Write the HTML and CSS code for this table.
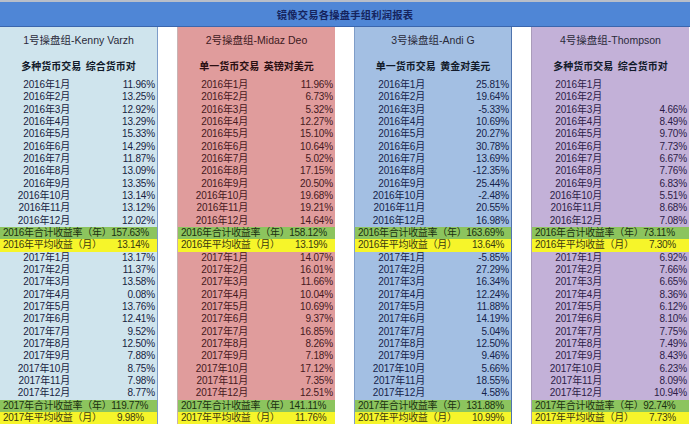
FILE: index.html
```html
<!DOCTYPE html>
<html lang="zh-CN">
<head>
<meta charset="utf-8">
<title>镜像交易各操盘手组利润报表</title>
<link rel="stylesheet" href="styles.css">
</head>
<body>
<div class="sheet">
  <div class="titlebar"><span class="title">镜像交易各操盘手组利润报表</span></div>
  <div class="panels">
    <section class="panel p1">
      <div class="ph">1号操盘组-Kenny Varzh</div>
      <div class="ps">多种货币交易&nbsp;&nbsp;综合货币对</div>
      <div class="row"><span class="d">2016年1月</span><span class="v">11.96%</span></div>
      <div class="row"><span class="d">2016年2月</span><span class="v">13.25%</span></div>
      <div class="row"><span class="d">2016年3月</span><span class="v">12.92%</span></div>
      <div class="row"><span class="d">2016年4月</span><span class="v">13.29%</span></div>
      <div class="row"><span class="d">2016年5月</span><span class="v">15.33%</span></div>
      <div class="row"><span class="d">2016年6月</span><span class="v">14.29%</span></div>
      <div class="row"><span class="d">2016年7月</span><span class="v">11.87%</span></div>
      <div class="row"><span class="d">2016年8月</span><span class="v">13.09%</span></div>
      <div class="row"><span class="d">2016年9月</span><span class="v">13.35%</span></div>
      <div class="row"><span class="d">2016年10月</span><span class="v">13.14%</span></div>
      <div class="row"><span class="d">2016年11月</span><span class="v">13.12%</span></div>
      <div class="row"><span class="d">2016年12月</span><span class="v">12.02%</span></div>
      <div class="row sum">2016年合计收益率（年）157.63%</div>
      <div class="row avg"><span class="l">2016年平均收益（月）</span><span class="av">13.14%</span></div>
      <div class="row"><span class="d">2017年1月</span><span class="v">13.17%</span></div>
      <div class="row"><span class="d">2017年2月</span><span class="v">11.37%</span></div>
      <div class="row"><span class="d">2017年3月</span><span class="v">13.58%</span></div>
      <div class="row"><span class="d">2017年4月</span><span class="v">0.08%</span></div>
      <div class="row"><span class="d">2017年5月</span><span class="v">13.76%</span></div>
      <div class="row"><span class="d">2017年6月</span><span class="v">12.41%</span></div>
      <div class="row"><span class="d">2017年7月</span><span class="v">9.52%</span></div>
      <div class="row"><span class="d">2017年8月</span><span class="v">12.50%</span></div>
      <div class="row"><span class="d">2017年9月</span><span class="v">7.88%</span></div>
      <div class="row"><span class="d">2017年10月</span><span class="v">8.75%</span></div>
      <div class="row"><span class="d">2017年11月</span><span class="v">7.98%</span></div>
      <div class="row"><span class="d">2017年12月</span><span class="v">8.77%</span></div>
      <div class="row sum">2017年合计收益率（年）119.77%</div>
      <div class="row avg"><span class="l">2017年平均收益（月）</span><span class="av">9.98%</span></div>
    </section>
    <section class="panel p2">
      <div class="ph">2号操盘组-Midaz Deo</div>
      <div class="ps">单一货币交易&nbsp;&nbsp;英镑对美元</div>
      <div class="row"><span class="d">2016年1月</span><span class="v">11.96%</span></div>
      <div class="row"><span class="d">2016年2月</span><span class="v">6.73%</span></div>
      <div class="row"><span class="d">2016年3月</span><span class="v">5.32%</span></div>
      <div class="row"><span class="d">2016年4月</span><span class="v">12.27%</span></div>
      <div class="row"><span class="d">2016年5月</span><span class="v">15.10%</span></div>
      <div class="row"><span class="d">2016年6月</span><span class="v">10.64%</span></div>
      <div class="row"><span class="d">2016年7月</span><span class="v">5.02%</span></div>
      <div class="row"><span class="d">2016年8月</span><span class="v">17.15%</span></div>
      <div class="row"><span class="d">2016年9月</span><span class="v">20.50%</span></div>
      <div class="row"><span class="d">2016年10月</span><span class="v">19.68%</span></div>
      <div class="row"><span class="d">2016年11月</span><span class="v">19.21%</span></div>
      <div class="row"><span class="d">2016年12月</span><span class="v">14.64%</span></div>
      <div class="row sum">2016年合计收益率（年）158.12%</div>
      <div class="row avg"><span class="l">2016年平均收益（月）</span><span class="av">13.19%</span></div>
      <div class="row"><span class="d">2017年1月</span><span class="v">14.07%</span></div>
      <div class="row"><span class="d">2017年2月</span><span class="v">16.01%</span></div>
      <div class="row"><span class="d">2017年3月</span><span class="v">11.66%</span></div>
      <div class="row"><span class="d">2017年4月</span><span class="v">10.04%</span></div>
      <div class="row"><span class="d">2017年5月</span><span class="v">10.69%</span></div>
      <div class="row"><span class="d">2017年6月</span><span class="v">9.37%</span></div>
      <div class="row"><span class="d">2017年7月</span><span class="v">16.85%</span></div>
      <div class="row"><span class="d">2017年8月</span><span class="v">8.26%</span></div>
      <div class="row"><span class="d">2017年9月</span><span class="v">7.18%</span></div>
      <div class="row"><span class="d">2017年10月</span><span class="v">17.12%</span></div>
      <div class="row"><span class="d">2017年11月</span><span class="v">7.35%</span></div>
      <div class="row"><span class="d">2017年12月</span><span class="v">12.51%</span></div>
      <div class="row sum">2017年合计收益率（年）141.11%</div>
      <div class="row avg"><span class="l">2017年平均收益（月）</span><span class="av">11.76%</span></div>
    </section>
    <section class="panel p3">
      <div class="ph">3号操盘组-Andi G</div>
      <div class="ps">单一货币交易&nbsp;&nbsp;黄金对美元</div>
      <div class="row"><span class="d">2016年1月</span><span class="v">25.81%</span></div>
      <div class="row"><span class="d">2016年2月</span><span class="v">19.64%</span></div>
      <div class="row"><span class="d">2016年3月</span><span class="v">-5.33%</span></div>
      <div class="row"><span class="d">2016年4月</span><span class="v">10.69%</span></div>
      <div class="row"><span class="d">2016年5月</span><span class="v">20.27%</span></div>
      <div class="row"><span class="d">2016年6月</span><span class="v">30.78%</span></div>
      <div class="row"><span class="d">2016年7月</span><span class="v">13.69%</span></div>
      <div class="row"><span class="d">2016年8月</span><span class="v">-12.35%</span></div>
      <div class="row"><span class="d">2016年9月</span><span class="v">25.44%</span></div>
      <div class="row"><span class="d">2016年10月</span><span class="v">-2.48%</span></div>
      <div class="row"><span class="d">2016年11月</span><span class="v">20.55%</span></div>
      <div class="row"><span class="d">2016年12月</span><span class="v">16.98%</span></div>
      <div class="row sum">2016年合计收益率（年）163.69%</div>
      <div class="row avg"><span class="l">2016年平均收益（月）</span><span class="av">13.64%</span></div>
      <div class="row"><span class="d">2017年1月</span><span class="v">-5.85%</span></div>
      <div class="row"><span class="d">2017年2月</span><span class="v">27.29%</span></div>
      <div class="row"><span class="d">2017年3月</span><span class="v">16.34%</span></div>
      <div class="row"><span class="d">2017年4月</span><span class="v">12.24%</span></div>
      <div class="row"><span class="d">2017年5月</span><span class="v">11.88%</span></div>
      <div class="row"><span class="d">2017年6月</span><span class="v">14.19%</span></div>
      <div class="row"><span class="d">2017年7月</span><span class="v">5.04%</span></div>
      <div class="row"><span class="d">2017年8月</span><span class="v">12.50%</span></div>
      <div class="row"><span class="d">2017年9月</span><span class="v">9.46%</span></div>
      <div class="row"><span class="d">2017年10月</span><span class="v">5.66%</span></div>
      <div class="row"><span class="d">2017年11月</span><span class="v">18.55%</span></div>
      <div class="row"><span class="d">2017年12月</span><span class="v">4.58%</span></div>
      <div class="row sum">2017年合计收益率（年）131.88%</div>
      <div class="row avg"><span class="l">2017年平均收益（月）</span><span class="av">10.99%</span></div>
    </section>
    <section class="panel p4">
      <div class="ph">4号操盘组-Thompson</div>
      <div class="ps">多种货币交易&nbsp;&nbsp;综合货币对</div>
      <div class="row"><span class="d">2016年1月</span><span class="v"></span></div>
      <div class="row"><span class="d">2016年2月</span><span class="v"></span></div>
      <div class="row"><span class="d">2016年3月</span><span class="v">4.66%</span></div>
      <div class="row"><span class="d">2016年4月</span><span class="v">8.49%</span></div>
      <div class="row"><span class="d">2016年5月</span><span class="v">9.70%</span></div>
      <div class="row"><span class="d">2016年6月</span><span class="v">7.73%</span></div>
      <div class="row"><span class="d">2016年7月</span><span class="v">6.67%</span></div>
      <div class="row"><span class="d">2016年8月</span><span class="v">7.76%</span></div>
      <div class="row"><span class="d">2016年9月</span><span class="v">6.83%</span></div>
      <div class="row"><span class="d">2016年10月</span><span class="v">5.51%</span></div>
      <div class="row"><span class="d">2016年11月</span><span class="v">8.68%</span></div>
      <div class="row"><span class="d">2016年12月</span><span class="v">7.08%</span></div>
      <div class="row sum">2016年合计收益率（年）73.11%</div>
      <div class="row avg"><span class="l">2016年平均收益（月）</span><span class="av">7.30%</span></div>
      <div class="row"><span class="d">2017年1月</span><span class="v">6.92%</span></div>
      <div class="row"><span class="d">2017年2月</span><span class="v">7.66%</span></div>
      <div class="row"><span class="d">2017年3月</span><span class="v">6.65%</span></div>
      <div class="row"><span class="d">2017年4月</span><span class="v">8.36%</span></div>
      <div class="row"><span class="d">2017年5月</span><span class="v">6.12%</span></div>
      <div class="row"><span class="d">2017年6月</span><span class="v">8.10%</span></div>
      <div class="row"><span class="d">2017年7月</span><span class="v">7.75%</span></div>
      <div class="row"><span class="d">2017年8月</span><span class="v">7.49%</span></div>
      <div class="row"><span class="d">2017年9月</span><span class="v">8.43%</span></div>
      <div class="row"><span class="d">2017年10月</span><span class="v">6.23%</span></div>
      <div class="row"><span class="d">2017年11月</span><span class="v">8.09%</span></div>
      <div class="row"><span class="d">2017年12月</span><span class="v">10.94%</span></div>
      <div class="row sum">2017年合计收益率（年）92.74%</div>
      <div class="row avg"><span class="l">2017年平均收益（月）</span><span class="av">7.73%</span></div>
    </section>
  </div>
</div>
</body>
</html>
```
FILE: styles.css
```css
html, body {
  margin: 0;
  padding: 0;
  background: #ffffff;
}
*, *::before, *::after {
  box-sizing: border-box;
}
body {
  width: 690px;
  height: 425px;
  overflow: hidden;
  font-family: "Liberation Sans", "Noto Sans CJK SC", sans-serif;
  font-size: 10px;
}
.sheet {
  display: flex;
  flex-direction: column;
}
.titlebar {
  height: 27px;
  border-top: 2px solid #b8bec9;
  border-bottom: 1px solid #3b66ad;
  background: #4f86d6;
  display: flex;
  align-items: center;
  justify-content: center;
}
.title {
  font-family: "Noto Sans CJK SC", sans-serif;
  font-weight: bold;
  font-size: 10.3px;
  color: #15245e;
  letter-spacing: 0.2px;
}
.panels {
  display: grid;
  grid-template-columns: repeat(4, 158px);
  column-gap: 19px;
}
.panel {
  display: flex;
  flex-direction: column;
  min-width: 0;
  color: #17223f;
}
.p1 { background: #cfe4ed; border-right: 1px solid #7d9cc9; }
.p2 { background: #e09c9c; color: #451820; border-left: 1px solid #c9b3b3; }
.p3 { background: #a3bfe3; color: #15224a; border-left: 1px solid #7f9dc8; border-right: 1px solid #4f73ad; }
.p4 { background: #c3b1d8; color: #2d1c47; border-left: 1px solid #a99cba; }
.ph {
  height: 26px;
  line-height: 26px;
  text-align: center;
  font-size: 10.5px;
  color: #2a2a3a;
}
.p2 .ph { color: #3e1a1e; }
.ps {
  height: 26px;
  line-height: 26px;
  text-align: center;
  font-family: "Noto Sans CJK SC", sans-serif;
  font-weight: bold;
  font-size: 10px;
  color: #111a2a;
}
.p2 .ps { color: #2a0f12; }
.row {
  height: 12.33px;
  line-height: 12.33px;
  display: grid;
  grid-template-columns: 70px 1fr;
  white-space: nowrap;
  letter-spacing: -0.15px;
}
.d { text-align: right; }
.v { text-align: right; padding-right: 2px; }
.row.sum {
  display: block;
  background: #8cc45e;
  color: #1a3010;
  padding-left: 3px;
  letter-spacing: -0.3px;
  overflow: hidden;
}
.row.avg {
  display: flex;
  background: #f6f52a;
  color: #3a3a10;
  padding-left: 3px;
  letter-spacing: -0.3px;
}
.l { width: 114px; flex: none; }
```
